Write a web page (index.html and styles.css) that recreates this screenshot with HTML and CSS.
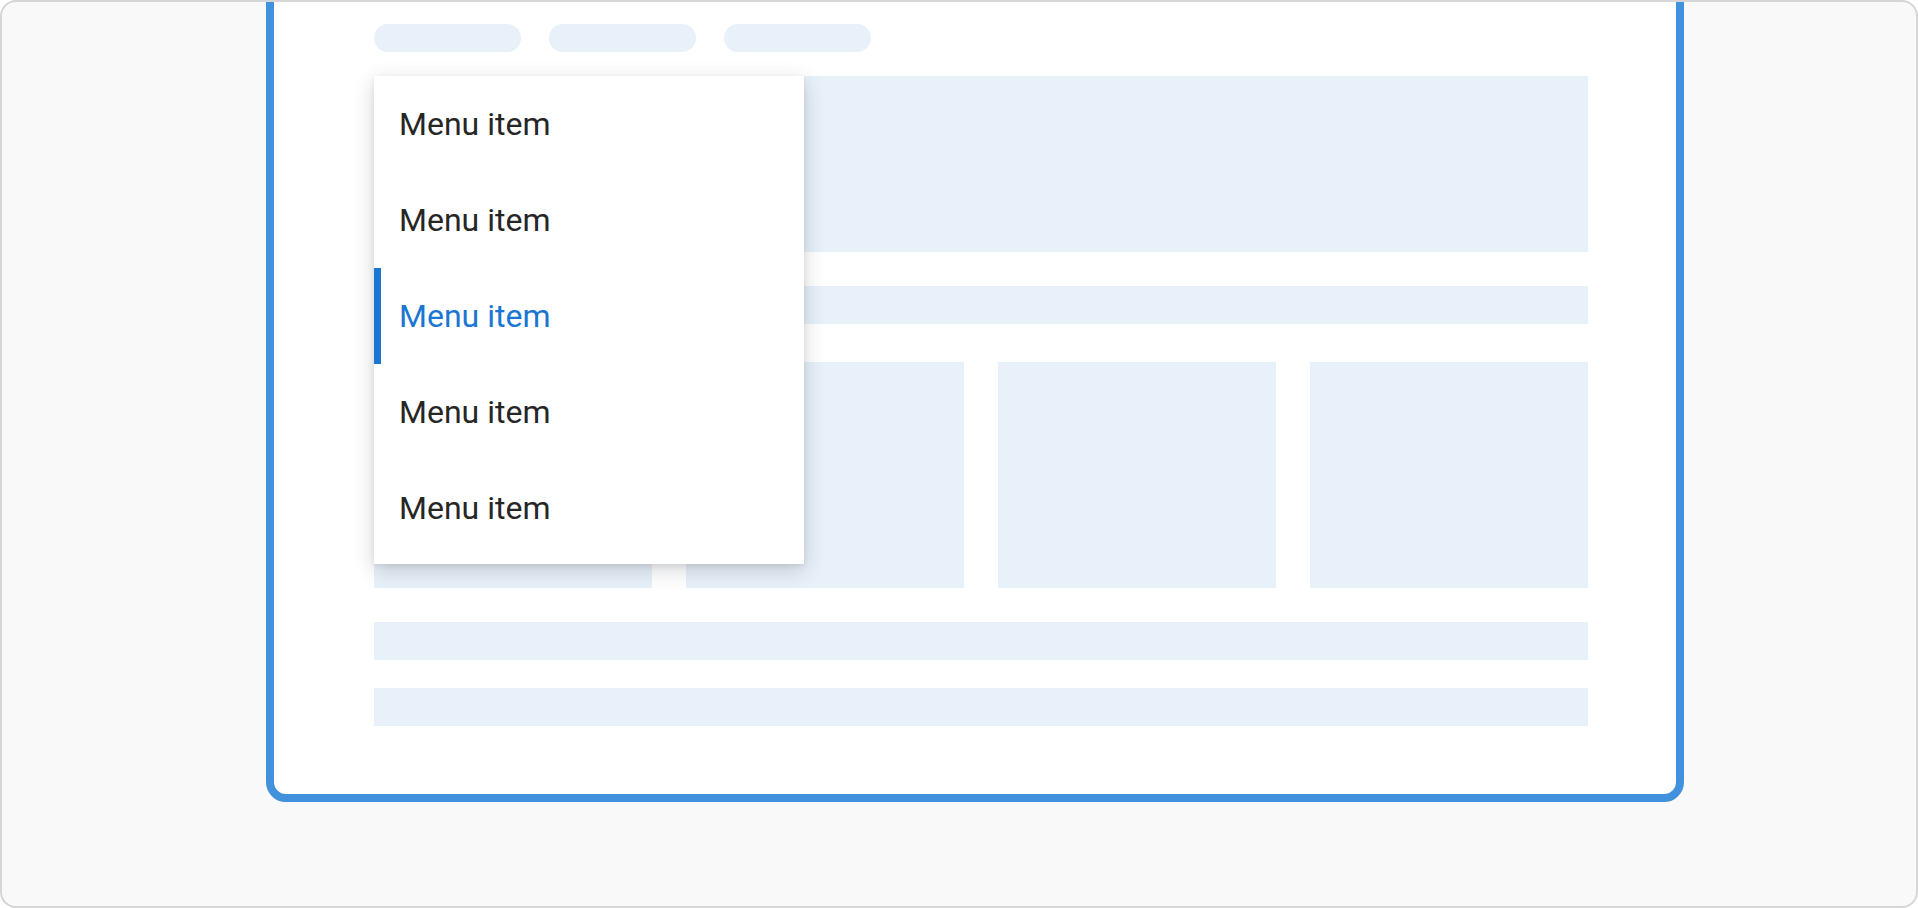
FILE: index.html
```html
<!DOCTYPE html>
<html lang="en">
  <head>
    <meta charset="UTF-8" />
    <meta name="viewport" content="width=device-width, initial-scale=1.0" />
    <title>Menu</title>
    <link rel="stylesheet" href="styles.css">
  </head>
  <body>
    <div class="screen">
      <div class="frame">
        <div class="pills">
          <span class="pill"></span>
          <span class="pill"></span>
          <span class="pill"></span>
        </div>
        <div class="page">
          <div class="block hero"></div>
          <div class="block bar"></div>
          <div class="cards">
            <div class="block card"></div>
            <div class="block card"></div>
            <div class="block card"></div>
            <div class="block card"></div>
          </div>
          <div class="block bar"></div>
          <div class="block bar"></div>

          <ul class="menu">
            <li class="menu-item">Menu item</li>
            <li class="menu-item">Menu item</li>
            <li class="menu-item selected">Menu item</li>
            <li class="menu-item">Menu item</li>
            <li class="menu-item">Menu item</li>
          </ul>
        </div>
      </div>
    </div>
  </body>
</html>
```

FILE: styles.css
```css
body {
  margin: 0;
  font-family: Roboto, "Liberation Sans", Arial, sans-serif;
}

.screen {
  box-sizing: border-box;
  height: 908px;
  border: 2px solid #d6d6d6;
  border-radius: 16px;
  background: #f9f9f9;
  overflow: hidden;
}

/* the frame runs off the top edge, so only its bottom corners show */
.frame {
  box-sizing: border-box;
  width: 1418px;
  height: 840px;
  margin: -40px 0 0 264px;
  padding: 54px 88px 0 100px;
  border: 8px solid #4191dc;
  border-radius: 20px;
  background: #fff;
}

.pills {
  display: flex;
  gap: 28px;
  margin-bottom: 24px;
}

.pill {
  width: 147px;
  height: 28px;
  border-radius: 14px;
  background: #e8f0f9;
}

.page {
  position: relative;
  display: flex;
  flex-direction: column;
}

.block {
  background: #e8f0f9;
}

.hero {
  height: 176px;
}

.bar {
  height: 38px;
  margin-top: 34px;
}

.bar:last-of-type {
  margin-top: 28px;
}

.cards {
  display: flex;
  gap: 34px;
  margin-top: 38px;
}

.card {
  flex: 1;
  height: 226px;
}

.menu {
  position: absolute;
  top: 0;
  left: 0;
  width: 430px;
  margin: 0;
  padding: 0 0 8px;
  list-style: none;
  background: #fff;
  box-shadow: 0 6px 20px rgba(40, 50, 60, 0.2), 0 2px 6px rgba(0, 0, 0, 0.08);
}

.menu-item {
  position: relative;
  display: flex;
  align-items: center;
  height: 96px;
  padding-left: 25px;
  font-size: 32px;
  color: #262626;
}

.menu-item.selected {
  color: #1976d2;
}

.menu-item.selected::before {
  content: "";
  position: absolute;
  left: 0;
  top: 0;
  bottom: 0;
  width: 7px;
  background: #1976d2;
}
```
